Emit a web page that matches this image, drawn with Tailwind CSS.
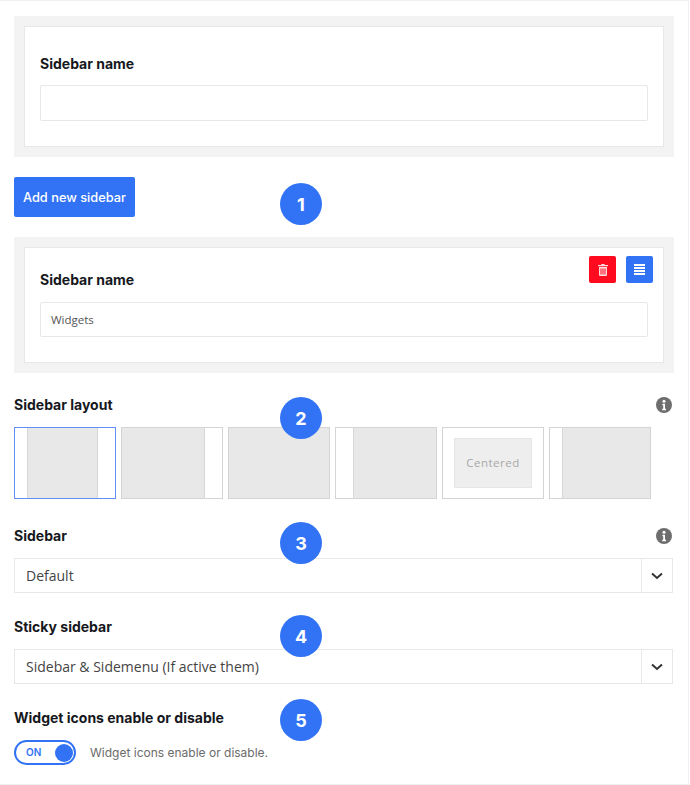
<!DOCTYPE html>
<html lang="en">
<head>
    <meta charset="UTF-8">
    <title>Sidebar settings</title>
    <script src="https://cdn.jsdelivr.net/npm/@tailwindcss/browser@4"></script>
</head>
<body class="bg-white font-['Inter','Liberation_Sans',sans-serif] text-[#16181d]">
    <div class="relative w-[689px] h-[785px] border-t border-b border-r border-[#efefef] pl-[14px] pt-[15px]">

        <!-- new sidebar -->
        <div class="w-[660px] h-[141px] bg-[#f3f3f3] p-[10px]">
            <div class="h-[121px] bg-white border border-[#e8e8e8] pl-[15px] pr-[15px] pt-[26px]">
                <div class="text-[14px] leading-[22px] font-bold">Sidebar name</div>
                <div class="mt-[10px] h-[36px] border border-[#e8e8e8] rounded-[2px]"></div>
            </div>
        </div>

        <div class="mt-[20px] w-[121px] h-[40px] pt-[1px] bg-[#3273f6] rounded-[2px] text-white text-[12.8px] font-medium flex items-center justify-center">Add new sidebar</div>

        <!-- existing sidebar -->
        <div class="mt-[20px] w-[660px] h-[136px] bg-[#f3f3f3] p-[10px]">
            <div class="relative h-[116px] bg-white border border-[#e8e8e8] pl-[15px] pr-[15px] pt-[21px]">
                <div class="text-[14px] leading-[22px] font-bold">Sidebar name</div>
                <div class="mt-[11px] h-[35px] border border-[#e8e8e8] rounded-[2px] flex items-center pl-[10px] text-[11.5px] text-[#555] font-['Open_Sans',sans-serif]">Widgets</div>
                <div class="absolute top-[8px] right-[10px] flex gap-[10px]">
                    <div class="w-[27px] h-[27px] bg-[#ff0a1e] rounded-[2px] flex items-center justify-center">
                        <svg width="10" height="12" viewBox="0 0 10 12" fill="#ffffff" fill-opacity="0.85"><path d="M3.500 0h3l.4 1H10v1.200H0V1h3.100zM1 3h8v8a1 1 0 0 1-1 1H2a1 1 0 0 1-1-1zm1.500 1.500v6h1v-6zm2 0v6h1v-6zm2 0v6h1v-6z"/></svg>
                    </div>
                    <div class="w-[27px] h-[27px] bg-[#3273f6] rounded-[2px] flex flex-col items-center justify-center gap-[1.5px]">
                        <span class="w-[11px] h-[1.5px] bg-white"></span>
                        <span class="w-[11px] h-[1.5px] bg-white"></span>
                        <span class="w-[11px] h-[1.5px] bg-white"></span>
                        <span class="w-[11px] h-[1.5px] bg-white"></span>
                    </div>
                </div>
            </div>
        </div>

        <!-- layout -->
        <div class="mt-[20px] w-[659px] flex items-center justify-between h-[22px]">
            <div class="text-[14px] font-bold">Sidebar layout</div>
            <svg class="mr-[1px] mt-[2px]" width="16" height="16" viewBox="0 0 16 16"><circle cx="8" cy="8" r="8" fill="#6e6e6e"/><circle cx="8" cy="4.200" r="1.500" fill="#fff"/><path d="M6.400 6.800h2.600v5h1v1.400H6.200v-1.400h1V8.200H6.400z" fill="#fff"/></svg>
        </div>
        <div class="mt-[12px] flex gap-[5px]">
            <div class="w-[102px] h-[72px] border border-[#5f8ff5] bg-white pl-[12px] pr-[17px]"><div class="h-full bg-[#e8e8e8] border-x border-[#d8d8d8]"></div></div>
            <div class="w-[102px] h-[72px] border border-[#d4d4d4] bg-white pr-[17px]"><div class="h-full bg-[#e8e8e8] border-r border-[#d8d8d8]"></div></div>
            <div class="w-[102px] h-[72px] border border-[#d4d4d4] bg-[#e8e8e8]"></div>
            <div class="w-[102px] h-[72px] border border-[#d4d4d4] bg-white pl-[17px]"><div class="h-full bg-[#e8e8e8] border-l border-[#d8d8d8]"></div></div>
            <div class="w-[102px] h-[72px] border border-[#d4d4d4] bg-white px-[11px] py-[10px]"><div class="h-full bg-[#eeeeee] border border-[#e6e6e6] flex items-center justify-center text-[11.5px] tracking-[0.5px] text-[#a8a8a8] font-['Open_Sans',sans-serif]">Centered</div></div>
            <div class="w-[102px] h-[72px] border border-[#d4d4d4] bg-white pl-[12px]"><div class="h-full bg-[#e8e8e8] border-l border-[#d8d8d8]"></div></div>
        </div>

        <!-- sidebar select -->
        <div class="mt-[25px] w-[659px] flex items-center justify-between h-[22px]">
            <div class="text-[14px] font-bold">Sidebar</div>
            <svg class="mr-[1px] mt-[2px]" width="16" height="16" viewBox="0 0 16 16"><circle cx="8" cy="8" r="8" fill="#6e6e6e"/><circle cx="8" cy="4.200" r="1.500" fill="#fff"/><path d="M6.400 6.800h2.600v5h1v1.400H6.200v-1.400h1V8.200H6.400z" fill="#fff"/></svg>
        </div>
        <div class="mt-[12px] w-[659px] h-[35px] border border-[#e8e8e8] flex items-center text-[14px] text-[#444] font-['Open_Sans',sans-serif]">
            <div class="flex-1 pl-[11px]">Default</div>
            <div class="w-[31px] h-full border-l border-[#e8e8e8] flex items-center justify-center">
                <svg width="12" height="8" viewBox="0 0 12 8" fill="none" stroke="#333" stroke-width="2"><path d="M1 1.500 6 6l5-4.500"/></svg>
            </div>
        </div>

        <!-- sticky select -->
        <div class="mt-[23px] text-[14px] leading-[22px] font-bold">Sticky sidebar</div>
        <div class="mt-[11px] w-[659px] h-[35px] border border-[#e8e8e8] flex items-center text-[14px] text-[#444] font-['Open_Sans',sans-serif]">
            <div class="flex-1 pl-[11px]">Sidebar &amp; Sidemenu (If active them)</div>
            <div class="w-[31px] h-full border-l border-[#e8e8e8] flex items-center justify-center">
                <svg width="12" height="8" viewBox="0 0 12 8" fill="none" stroke="#333" stroke-width="2"><path d="M1 1.500 6 6l5-4.500"/></svg>
            </div>
        </div>

        <!-- widget icons -->
        <div class="mt-[23px] text-[14px] leading-[22px] font-bold">Widget icons enable or disable</div>
        <div class="mt-[11px] flex items-center">
            <div class="w-[62px] h-[25px] border-2 border-[#3273f6] rounded-full bg-white flex items-center justify-between pl-[10px] pr-[1.500px]">
                <span class="text-[10px] font-semibold text-[#3273f6]">ON</span>
                <span class="w-[18px] h-[18px] rounded-full bg-[#3273f6]"></span>
            </div>
            <div class="ml-[14px] text-[12px] text-[#6b6b6b]">Widget icons enable or disable.</div>
        </div>

        <!-- step badges -->
        <div class="absolute left-[280px] top-[182px] w-[42px] h-[42px] rounded-full bg-[#3273f6] text-white text-[18px] font-bold flex items-center justify-center">1</div>
        <div class="absolute left-[280px] top-[396px] w-[42px] h-[42px] rounded-full bg-[#3273f6] text-white text-[18px] font-bold flex items-center justify-center">2</div>
        <div class="absolute left-[280px] top-[521px] w-[42px] h-[42px] rounded-full bg-[#3273f6] text-white text-[18px] font-bold flex items-center justify-center">3</div>
        <div class="absolute left-[280px] top-[614px] w-[42px] h-[42px] rounded-full bg-[#3273f6] text-white text-[18px] font-bold flex items-center justify-center">4</div>
        <div class="absolute left-[280px] top-[698px] w-[42px] h-[42px] rounded-full bg-[#3273f6] text-white text-[18px] font-bold flex items-center justify-center">5</div>
    </div>
</body>
</html>
